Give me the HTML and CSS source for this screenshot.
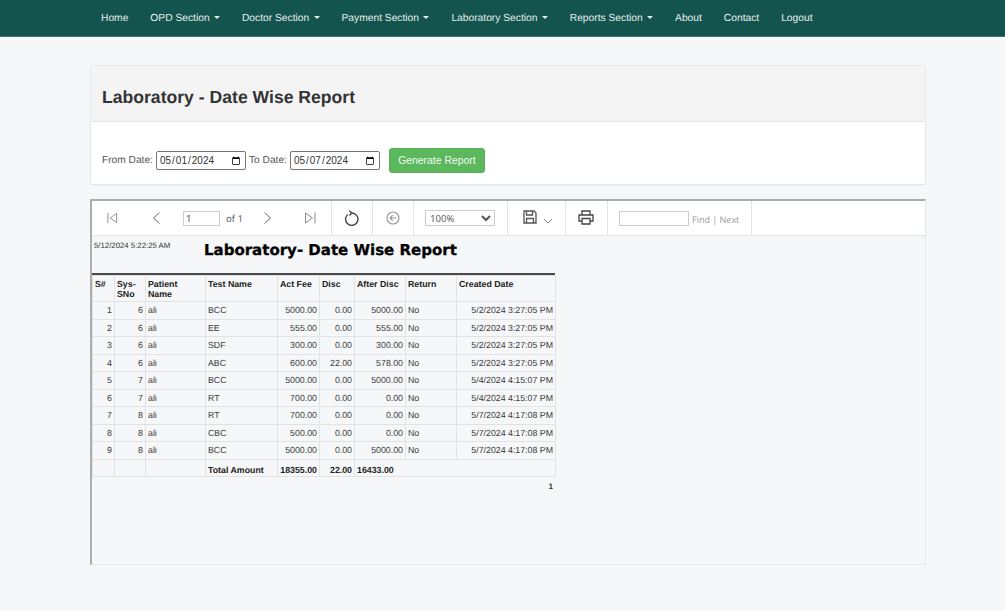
FILE: index.html
```html
<!DOCTYPE html>
<html lang="en">
<head>
<meta charset="utf-8">
<title>Laboratory - Date Wise Report</title>
<link rel="stylesheet" href="styles.css">
</head>
<body>
<nav class="navbar">
  <a class="nav-link" href="#">Home</a>
  <a class="nav-link" href="#">OPD Section <span class="caret"></span></a>
  <a class="nav-link" href="#">Doctor Section <span class="caret"></span></a>
  <a class="nav-link" href="#">Payment Section <span class="caret"></span></a>
  <a class="nav-link" href="#">Laboratory Section <span class="caret"></span></a>
  <a class="nav-link" href="#">Reports Section <span class="caret"></span></a>
  <a class="nav-link" href="#">About</a>
  <a class="nav-link" href="#">Contact</a>
  <a class="nav-link" href="#">Logout</a>
</nav>
<main class="page">
  <section class="panel">
    <header class="panel-heading"><h1 class="panel-title">Laboratory - Date Wise Report</h1></header>
    <form class="panel-body">
      <label class="field-label">From Date:</label>
      <input class="date-input" type="date" value="2024-05-01">
      <label class="field-label">To Date:</label>
      <input class="date-input" type="date" value="2024-05-07">
      <button class="btn-generate" type="button">Generate Report</button>
    </form>
  </section>
  <section class="viewer">
    <div class="toolbar">
      <div class="tool-group tool-pager">
        <svg class="icon ic-first" viewBox="0 0 12 12"><path d="M1 .5v11M10.5 1 3.5 6l7 5z"/></svg>
        <svg class="icon ic-prev" viewBox="0 0 9 12"><path d="M7.5.5 1.5 6l6 5.5"/></svg>
        <input class="page-input" type="text" value="1">
        <span class="of-text">of 1</span>
        <svg class="icon ic-next" viewBox="0 0 9 12"><path d="M1.5.5 7.5 6l-6 5.5"/></svg>
        <svg class="icon ic-last" viewBox="0 0 12 12"><path d="M11 .5v11M1.500 1l7 5-7 5z"/></svg>
      </div>
      <div class="tool-group tool-icon"><svg class="icon ic-refresh" viewBox="0 0 16 16"><path d="M7.500 3a6.200 6.200 0 1 1-3.800 1.500"/><path d="M5.200 .8 7.800 3 5.400 5.400"/></svg></div>
      <div class="tool-group tool-icon"><svg class="icon ic-back" viewBox="0 0 16 16"><circle cx="8" cy="8" r="6"/><path d="M11.500 8H5M7.800 5.200 5 8l2.800 2.800"/></svg></div>
      <div class="tool-group tool-zoom">
        <select class="zoom-select"><option>100%</option></select>
      </div>
      <div class="tool-group tool-save">
        <svg class="icon ic-save" viewBox="0 0 14 14"><path d="M1 1h10l2 2v10H1z"/><path d="M3.500 1v4h6V1M3.500 13V8.500h7V13"/></svg>
        <svg class="icon ic-down" viewBox="0 0 10 6"><path d="M1 1l4 4 4-4"/></svg>
      </div>
      <div class="tool-group tool-print">
        <svg class="icon ic-print" viewBox="0 0 16 15"><path d="M4 5V1h8v4M4 11H1V5h14v6h-3M4 8.500h8V14H4z"/></svg>
      </div>
      <div class="tool-group tool-find">
        <input class="find-input" type="text">
        <span class="find-text">Find | Next</span>
      </div>
    </div>
    <div class="report">
      <div class="report-head">
        <div class="report-date">5/12/2024 5:22:25 AM</div>
        <div class="report-title">Laboratory- Date Wise Report</div>
      </div>
      <table class="report-table">
        <colgroup>
          <col class="c-sn"><col class="c-sys"><col class="c-name"><col class="c-test"><col class="c-fee"><col class="c-disc"><col class="c-after"><col class="c-ret"><col class="c-date">
        </colgroup>
        <thead>
          <tr><th>S#</th><th>Sys-SNo</th><th>Patient Name</th><th>Test Name</th><th>Act Fee</th><th>Disc</th><th>After Disc</th><th>Return</th><th>Created Date</th></tr>
        </thead>
        <tbody>
          <tr><td class="num">1</td><td class="num">6</td><td>ali</td><td>BCC</td><td class="num">5000.00</td><td class="num">0.00</td><td class="num">5000.00</td><td>No</td><td class="num">5/2/2024 3:27:05 PM</td></tr>
          <tr><td class="num">2</td><td class="num">6</td><td>ali</td><td>EE</td><td class="num">555.00</td><td class="num">0.00</td><td class="num">555.00</td><td>No</td><td class="num">5/2/2024 3:27:05 PM</td></tr>
          <tr><td class="num">3</td><td class="num">6</td><td>ali</td><td>SDF</td><td class="num">300.00</td><td class="num">0.00</td><td class="num">300.00</td><td>No</td><td class="num">5/2/2024 3:27:05 PM</td></tr>
          <tr><td class="num">4</td><td class="num">6</td><td>ali</td><td>ABC</td><td class="num">600.00</td><td class="num">22.00</td><td class="num">578.00</td><td>No</td><td class="num">5/2/2024 3:27:05 PM</td></tr>
          <tr><td class="num">5</td><td class="num">7</td><td>ali</td><td>BCC</td><td class="num">5000.00</td><td class="num">0.00</td><td class="num">5000.00</td><td>No</td><td class="num">5/4/2024 4:15:07 PM</td></tr>
          <tr><td class="num">6</td><td class="num">7</td><td>ali</td><td>RT</td><td class="num">700.00</td><td class="num">0.00</td><td class="num">0.00</td><td>No</td><td class="num">5/4/2024 4:15:07 PM</td></tr>
          <tr><td class="num">7</td><td class="num">8</td><td>ali</td><td>RT</td><td class="num">700.00</td><td class="num">0.00</td><td class="num">0.00</td><td>No</td><td class="num">5/7/2024 4:17:08 PM</td></tr>
          <tr><td class="num">8</td><td class="num">8</td><td>ali</td><td>CBC</td><td class="num">500.00</td><td class="num">0.00</td><td class="num">0.00</td><td>No</td><td class="num">5/7/2024 4:17:08 PM</td></tr>
          <tr><td class="num">9</td><td class="num">8</td><td>ali</td><td>BCC</td><td class="num">5000.00</td><td class="num">0.00</td><td class="num">5000.00</td><td>No</td><td class="num">5/7/2024 4:17:08 PM</td></tr>
        </tbody>
        <tfoot>
          <tr><td></td><td></td><td></td><td class="total">Total Amount</td><td class="total num">18355.00</td><td class="total num">22.00</td><td class="total" colspan="3">16433.00</td></tr>
        </tfoot>
      </table>
      <div class="page-number">1</div>
    </div>
  </section>
</main>
</body>
</html>
```
FILE: styles.css
```css
* { box-sizing: border-box; }
html, body { margin: 0; height: 100%; overflow: hidden; }
body {
  background: #f6f7f9;
  font-family: "Liberation Sans", Arial, sans-serif;
  color: #333;
  text-rendering: geometricPrecision;
}

.navbar {
  display: flex;
  align-items: center;
  height: 37px;
  padding-left: 90px;
  background: #14544f;
  border-bottom: 1px solid #3b7670;
}
.nav-link {
  padding: 0 11px;
  font-size: 10.25px;
  color: #e3ecea;
  text-decoration: none;
}
.caret {
  display: inline-block;
  width: 0;
  height: 0;
  margin-left: 1.500px;
  vertical-align: middle;
  border-top: 3px solid #e3ecea;
  border-left: 3px solid transparent;
  border-right: 3px solid transparent;
}

.page { padding: 28px 79px 0 90px; }

.panel {
  height: 120px;
  background: #fff;
  border: 1px solid #e6e7e9;
  border-radius: 3px;
  box-shadow: 0 1px 1px rgba(0, 0, 0, .04);
  overflow: hidden;
}
.panel-heading {
  display: flex;
  align-items: center;
  height: 56px;
  padding: 8px 11px 0;
  background: #f4f4f4;
  border-bottom: 1px solid #e6e7e9;
}
.panel-title {
  margin: 0;
  font-size: 17.6px;
  font-weight: 700;
  color: #333;
}
.panel-body {
  display: flex;
  align-items: center;
  padding: 26px 11px 0;
}
.field-label { font-size: 10.2px; color: #555; }
.date-input {
  width: 90px;
  height: 19px;
  margin: 0 3px;
  padding: 0 2px;
  font: 10px "Liberation Sans", Arial, sans-serif;
  color: #333;
  background: #fff;
  border: 1px solid #767676;
  border-radius: 2px;
}
.btn-generate {
  width: 96px;
  height: 25px;
  margin-left: 6px;
  padding: 0;
  font: 10.4px "Liberation Sans", Arial, sans-serif;
  color: #f2f9f2;
  background: #5cb85c;
  border: 1px solid #55b055;
  border-radius: 3px;
}

.viewer {
  display: flex;
  flex-direction: column;
  height: 366px;
  margin-top: 14px;
  border-top: 2px solid #adadad;
  border-left: 2px solid #adadad;
  border-right: 1px solid #e6e7e9;
  border-bottom: 1px solid #e6e7e9;
}
.toolbar {
  display: flex;
  flex: none;
  height: 35px;
  background: #fff;
  border-bottom: 1px solid #e4e4e4;
}
.tool-group {
  display: flex;
  flex: none;
  align-items: center;
  border-right: 1px solid #e4e4e4;
}
.icon {
  flex: none;
  fill: none;
  stroke: #777;
  stroke-width: 1;
}
.tool-pager { width: 240px; padding-left: 15px; }
.ic-first { width: 11px; height: 12px; stroke: #888; }
.ic-prev { width: 9px; height: 12px; margin-left: 34px; stroke: #666; }
.page-input {
  width: 37px;
  height: 15px;
  margin-left: 22px;
  padding: 0 2px;
  font: 9.6px "Open Sans", sans-serif;
  color: #444;
  border: 1px solid #ccc;
  background: #fff;
}
.of-text { margin-left: 6px; width: 17px; font: 9.6px "Open Sans", sans-serif; color: #555; }
.ic-next { width: 9px; height: 12px; margin-left: 20px; stroke: #666; }
.ic-last { width: 12px; height: 12px; margin-left: 32px; stroke: #888; }

.tool-icon { width: 41px; justify-content: center; }
.ic-refresh { width: 16px; height: 16px; stroke: #444; stroke-width: 1.400; }
.ic-back { width: 16px; height: 16px; stroke: #999; stroke-width: 1.200; }

.tool-zoom { width: 94px; padding-left: 11px; }
.zoom-select {
  width: 70px;
  height: 16px;
  padding: 0;
  font: 9.6px "Open Sans", sans-serif;
  color: #555;
  background: #fff;
  border: 1px solid #ccc;
}

.tool-save { width: 58px; padding-left: 15px; }
.ic-save { width: 14px; height: 14px; margin-top: -2px; stroke: #555; stroke-width: 1.300; }
.ic-down { width: 10px; height: 6px; margin: 6px 0 0 6px; stroke: #888; }

.tool-print { width: 42px; padding-left: 12px; }
.ic-print { width: 16px; height: 15px; margin-top: -2px; stroke: #444; stroke-width: 1.300; }

.tool-find { width: 144px; padding-left: 11px; }
.find-input {
  width: 70px;
  height: 15px;
  margin-top: 1px;
  padding: 0 2px;
  background: #fff;
  border: 1px solid #ccc;
}
.find-text { margin: 2px 0 0 3px; font: 9px "Open Sans", sans-serif; color: #999; white-space: nowrap; }

.report { flex: 1; width: 463px; }
.report-head {
  display: flex;
  height: 39px;
  border-bottom: 2px solid #4a4a4a;
}
.report-date {
  flex: none;
  width: 112px;
  padding: 5px 0 0 2px;
  font-size: 7.8px;
  color: #333;
  white-space: nowrap;
}
.report-title {
  padding-top: 5px;
  font-family: "DejaVu Sans", sans-serif;
  font-size: 15px;
  font-weight: 700;
  color: #000;
  white-space: nowrap;
  -webkit-text-stroke: .3px #000;
}
.report-table {
  width: 463px;
  margin: 0;
  table-layout: fixed;
  border-collapse: collapse;
  font-size: 8.8px;
}
.c-sn { width: 22px; }
.c-sys { width: 31px; }
.c-name { width: 60px; }
.c-test { width: 72px; }
.c-fee { width: 42px; }
.c-disc { width: 35px; }
.c-after { width: 51px; }
.c-ret { width: 51px; }
.c-date { width: 99px; }
.report-table th,
.report-table td {
  padding: 0 2px;
  border: 1px solid #e1e2e4;
  line-height: 10px;
}
.report-table th {
  height: 26px;
  padding-top: 3px;
  vertical-align: top;
  text-align: left;
  font-weight: 700;
  color: #222;
}
.report-table td { height: 17.500px; color: #3a3a3a; }
.report-table td.num { text-align: right; }
.report-table td.total { padding-top: 4px; font-weight: 700; color: #222; }
.page-number {
  padding: 5px 2px 0 0;
  text-align: right;
  font-size: 8px;
  font-weight: 700;
  color: #333;
}
```
